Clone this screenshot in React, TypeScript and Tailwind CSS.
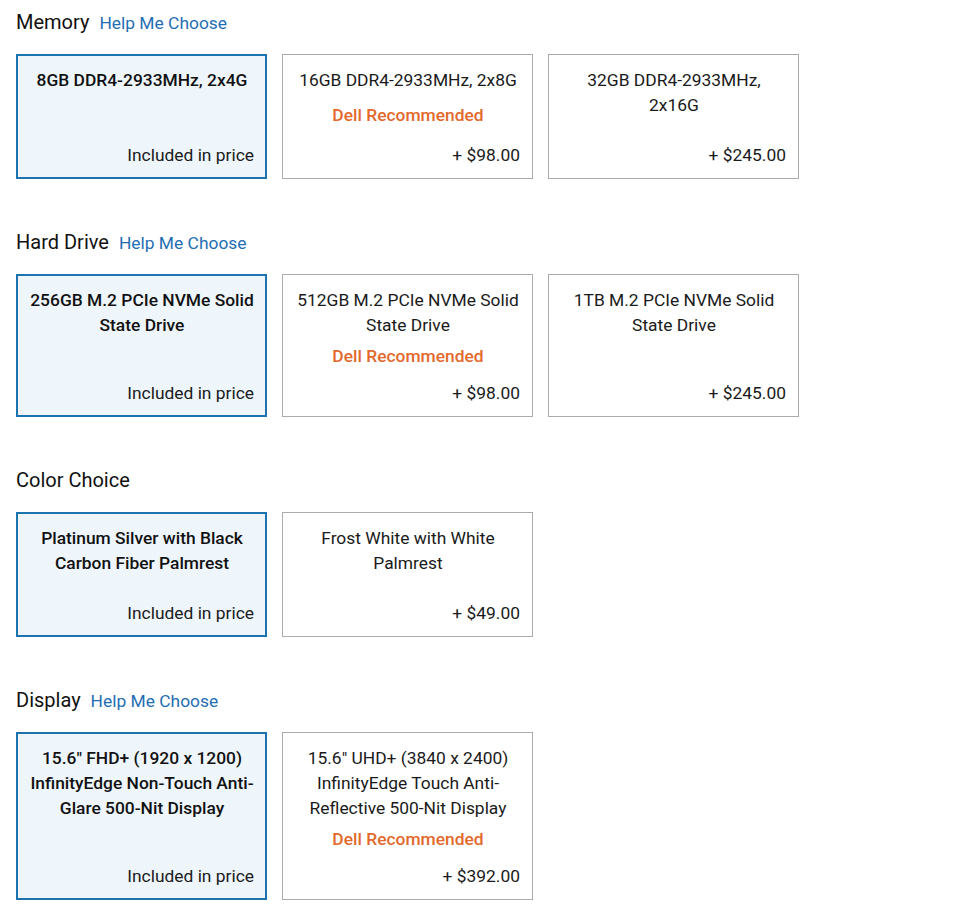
import React from "react";

type Option = {
  title: string;
  price: string;
  selected?: boolean;
  recommended?: boolean;
};

type Section = {
  name: string;
  help?: boolean;
  options: Option[];
};

const sections: Section[] = [
  {
    name: "Memory",
    help: true,
    options: [
      { title: "8GB DDR4-2933MHz, 2x4G", price: "Included in price", selected: true },
      { title: "16GB DDR4-2933MHz, 2x8G", price: "+ $98.00", recommended: true },
      { title: "32GB DDR4-2933MHz, 2x16G", price: "+ $245.00" },
    ],
  },
  {
    name: "Hard Drive",
    help: true,
    options: [
      { title: "256GB M.2 PCIe NVMe Solid State Drive", price: "Included in price", selected: true },
      { title: "512GB M.2 PCIe NVMe Solid State Drive", price: "+ $98.00", recommended: true },
      { title: "1TB M.2 PCIe NVMe Solid State Drive", price: "+ $245.00" },
    ],
  },
  {
    name: "Color Choice",
    options: [
      { title: "Platinum Silver with Black Carbon Fiber Palmrest", price: "Included in price", selected: true },
      { title: "Frost White with White Palmrest", price: "+ $49.00" },
    ],
  },
  {
    name: "Display",
    help: true,
    options: [
      {
        title: "15.6\" FHD+ (1920 x 1200) InfinityEdge Non-Touch Anti-Glare 500-Nit Display",
        price: "Included in price",
        selected: true,
      },
      {
        title: "15.6\" UHD+ (3840 x 2400) InfinityEdge Touch Anti-Reflective 500-Nit Display",
        price: "+ $392.00",
        recommended: true,
      },
    ],
  },
];

function Card({ o }: { o: Option }) {
  return (
    <div
      className={
        o.selected
          ? "w-[251px] min-h-[125px] flex flex-col border-2 border-[#1b74b0] bg-[#eef6fc] pl-[12px] pr-[11px] pt-[12px] pb-[9px]"
          : "w-[251px] min-h-[125px] flex flex-col border border-[#ababab] bg-white pl-[13px] pr-[12px] pt-[13px] pb-[10px]"
      }
    >
      <div
        className={
          o.selected
            ? "text-center leading-[25px] font-medium text-[#111]"
            : "text-center leading-[25px] text-[#1a1a1a]"
        }
      >
        {o.title}
      </div>
      <div className="flex-1 flex items-center justify-center pt-[6px] pb-[13px]">
        {o.recommended && (
          <span className="leading-[24px] font-medium text-[#e3692c]">Dell Recommended</span>
        )}
      </div>
      <div className="text-right leading-[25px] text-[#1a1a1a]">{o.price}</div>
    </div>
  );
}

export default function App() {
  return (
    <div
      className="w-[960px] h-[912px] bg-white pl-4 pt-[8px] text-[17.4px] overflow-hidden"
      style={{ fontFamily: "Roboto, 'Noto Sans', sans-serif" }}
    >
      {sections.map((s, i) => (
        <div key={s.name} className={i === 0 ? "" : "mt-[49px]"}>
          <div className="flex items-baseline gap-[10px] h-[28px] leading-[28px]">
            <span className="text-[20px] text-[#111]">{s.name}</span>
            {s.help && <span className="text-[17.4px] text-[#1f6eb3]">Help Me Choose</span>}
          </div>
          <div className="mt-[18px] flex gap-[15px]">
            {s.options.map((o) => (
              <Card key={o.title} o={o} />
            ))}
          </div>
        </div>
      ))}
    </div>
  );
}
